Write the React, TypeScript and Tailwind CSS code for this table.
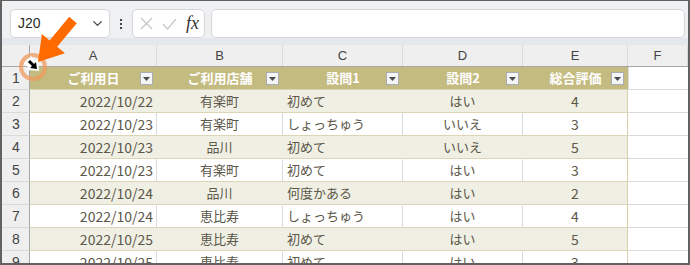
import { ChevronDown } from 'lucide-react';

const COLS = [127, 126, 120, 120, 105];
const HEADERS = ['ご利用日', 'ご利用店舗', '設問1', '設問2', '総合評価'];
const LETTERS = ['A', 'B', 'C', 'D', 'E', 'F'];

const ROWS: string[][] = [
  ['2022/10/22', '有楽町', '初めて', 'はい', '4'],
  ['2022/10/23', '有楽町', 'しょっちゅう', 'いいえ', '3'],
  ['2022/10/23', '品川', '初めて', 'いいえ', '5'],
  ['2022/10/23', '有楽町', '初めて', 'はい', '3'],
  ['2022/10/24', '品川', '何度かある', 'はい', '2'],
  ['2022/10/24', '恵比寿', 'しょっちゅう', 'はい', '4'],
  ['2022/10/25', '恵比寿', '初めて', 'はい', '5'],
  ['2022/10/25', '恵比寿', '初めて', 'はい', '3'],
];

const ALIGN = [
  'justify-end pr-[3px] text-[14px]',
  'justify-center',
  'justify-start pl-[4px]',
  'justify-center',
  'justify-center text-[14px]',
];

const font = { fontFamily: '"Noto Sans CJK JP", "Noto Sans", sans-serif' };
const latin = { fontFamily: '"Liberation Sans", sans-serif' };

function FilterButton() {
  return (
    <span className="absolute right-[4px] top-[5px] w-[13px] h-[13px] bg-[#f4f5f7] border border-[#a9adb5] flex items-center justify-center">
      <svg width="7" height="4" viewBox="0 0 7 4"><path d="M0 0h7L3.5 4z" fill="#4a4a4a" /></svg>
    </span>
  );
}

export default function App() {
  return (
    <div className="relative w-[690px] h-[265px] overflow-hidden bg-white border-x-2 border-b-2 border-t border-[#626262]" style={font}>
      {/* toolbar */}
      <div className="h-[37px] bg-[#eff0f2] flex items-end pl-[8px] pr-[3px] gap-[6px]">
        <div className="w-[100px] h-[29px] bg-white border border-[#d4d6da] rounded-[5px] flex items-center pl-[7px] pr-[4px] justify-between">
          <span className="text-[14px] text-[#2b2b2b]" style={latin}>J20</span>
          <ChevronDown size={15} strokeWidth={2} className="text-[#444]" />
        </div>
        <div className="w-[10px] h-[29px] flex flex-col items-center justify-center gap-[2px]">
          <span className="w-[2px] h-[2px] bg-[#444]" />
          <span className="w-[2px] h-[2px] bg-[#444]" />
          <span className="w-[2px] h-[2px] bg-[#444]" />
        </div>
        <div className="w-[73px] h-[29px] bg-white border border-[#d4d6da] rounded-[5px] flex items-center pl-[7px] gap-[9px]">
          <svg width="13" height="13" viewBox="0 0 13 13"><path d="M1 1l11 11M12 1L1 12" stroke="#c6c8cc" strokeWidth="1.3" fill="none" /></svg>
          <svg width="15" height="12" viewBox="0 0 15 12"><path d="M1 6l4.5 5L14 1" stroke="#c6c8cc" strokeWidth="1.3" fill="none" /></svg>
          <span className="text-[18px] italic text-[#333] leading-none -mt-[2px]" style={{ fontFamily: '"Liberation Serif", serif' }}>fx</span>
        </div>
        <div className="flex-1 h-[29px] bg-white border border-[#d4d6da] rounded-[5px]" />
      </div>
      <div className="h-[7px] bg-[#e4e8ed]" />

      {/* column letters */}
      <div className="flex h-[22px] bg-[#efefef] border-b border-[#a6a6a6] text-[13px] text-[#444]" style={latin}>
        <div className="w-[28px] border-r border-[#a6a6a6]" />
        {LETTERS.map((l, i) => (
          <div key={l} className={`flex items-center justify-center border-r border-[#dadada] ${i === 5 ? 'flex-1' : ''}`} style={i < 5 ? { width: COLS[i] } : undefined}>
            {l}
          </div>
        ))}
      </div>

      {/* row 1 header */}
      <div className="flex h-[23px]">
        <div className="w-[28px] bg-[#efefef] border-r border-b border-[#a6a6a6] border-b-[#dadada] flex items-center pl-[10px] text-[14px] text-[#444]" style={latin}>1</div>
        {HEADERS.map((h, i) => (
          <div key={h} className="relative bg-[#c4bb80] border-b border-[#d9d4b4] flex items-center justify-center text-white font-bold text-[13px]" style={{ width: COLS[i] }}>
            {h}
            <FilterButton />
          </div>
        ))}
        <div className="flex-1 border-l border-b border-[#dadada]" />
      </div>

      {ROWS.map((r, ri) => {
        const band = ri % 2 === 0;
        return (
          <div key={ri} className="flex h-[23px] text-[13px] text-[#5c584a]">
            <div className="w-[28px] bg-[#efefef] border-r border-b border-[#a6a6a6] border-b-[#dadada] flex items-center pl-[10px] text-[14px] text-[#444]" style={latin}>{ri + 2}</div>
            {r.map((c, ci) => (
              <div
                key={ci}
                className={`flex items-center border-b border-r border-b-[#dcd6b6] ${ALIGN[ci]} ${band ? 'bg-[#f0efe4] border-r-[#f0efe4]' : 'bg-white border-r-[#dadada]'} ${ci === 4 ? '!border-r-[#d6cfa9]' : ''}`}
                style={{ width: COLS[ci] }}
              >
                {c}
              </div>
            ))}
            <div className="flex-1 border-b border-[#dadada]" />
          </div>
        );
      })}

      {/* pointer callout */}
      <svg className="absolute left-0 top-0 pointer-events-none" width="90" height="90" viewBox="0 0 90 90">
        <circle cx="31" cy="66" r="12" fill="none" stroke="#f09a5c" strokeOpacity="0.75" strokeWidth="4" />
        <polygon points="67.2,15.8 74.8,22.2 55.2,45.8 62.9,52.2 36,61 39.9,33 47.6,39.4" fill="#ff6a00" />
        <path d="M26 60l6 6" stroke="#fff" strokeWidth="5" />
        <polygon points="24,59 28,55 33,60 35,58 36,70 24,69 26,67 21,62" fill="#fff" transform="translate(1,0)" />
        <path d="M27 60l5 5" stroke="#000" strokeWidth="3" />
        <polygon points="35,68 28,67 34,61" fill="#000" />
      </svg>
    </div>
  );
}
